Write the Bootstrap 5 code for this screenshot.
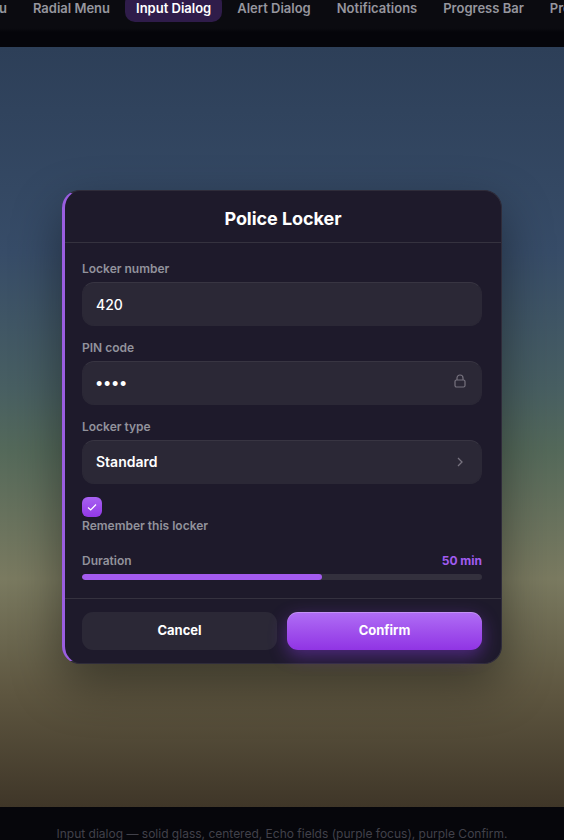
<!DOCTYPE html>
<html lang="en">
<head>
<meta charset="utf-8">
<title>Input Dialog</title>
<link href="https://cdn.jsdelivr.net/npm/bootstrap@5.3.0/dist/css/bootstrap.min.css" rel="stylesheet">
<style>
html,body{height:840px;overflow:hidden;background:#06060b;font-family:Inter,"Liberation Sans",sans-serif}
.topbar{height:47px;overflow:hidden;background:linear-gradient(#0b0b10 0,#0b0b10 28px,#05050a 32px)}
.tabs{flex-wrap:nowrap;gap:4px;width:max-content;margin-top:-7px;margin-left:-92.5px}
.tabs .nav-link{font-size:13px;font-weight:600;line-height:16px;padding:6.5px 11px;color:#96969e;border-radius:10px;white-space:nowrap}
.tabs .nav-link.active{background:#2f1c4a;color:#fff}
.stage{height:760px;background:linear-gradient(180deg,#2d3f58 0,#374c68 27%,#485f62 45%,#54695a 53%,#7a7a60 70%,#5e5640 85%,#3f3628 100%)}
.dlg{width:440px;height:474px;margin-top:143px;background:#1e1a2b;border:1px solid #2f2c3a;border-left:3px solid #9a5ee0;border-radius:18px;box-shadow:0 20px 50px rgba(0,0,0,.42);overflow:visible}
.dlg .card-header{flex:none;background:none;border-bottom:1px solid #35323f;padding:3px 0 0 0;box-sizing:content-box;height:48px;color:#fff;font-size:18px;font-weight:700;letter-spacing:-.05px;border-radius:0}
.dlg .card-body{padding:18px 19px 0 17px;flex:none}
.lbl{display:block;font-size:12px;font-weight:600;line-height:15px;color:#92929c;margin:0 0 6px}
.fieldwrap{margin-bottom:14px}
.fieldwrap.lastfield{margin-bottom:13px}
.dlg .form-control{height:44px;background:#2b2836;border:1px solid #2b2836;border-top-color:#383542;border-radius:12px;color:#fff;font-size:14px;font-weight:500;padding:0 13px;box-shadow:none}
.dlg .form-control:focus{background:#2b2836;color:#fff;border-color:#2b2836;border-top-color:#383542}
.dlg .pinfield{letter-spacing:1.7px;font-family:"Liberation Sans",sans-serif;font-size:18px;padding-top:3px}
.selectfield{height:44px;background:#2b2836;border:1px solid #2b2836;border-top-color:#383542;border-radius:12px;color:#fff;font-size:14px;font-weight:600;padding:0 13px 1px}
.iconwrap{position:relative}
.iconover{position:absolute;right:15px;top:13px;width:14px;height:14px}
.chev{margin-right:1px}
.tick{width:20px;height:20px;background:linear-gradient(#a862f2,#9238e6);border-radius:6px}
.remember{font-size:12px;font-weight:600;line-height:15px;color:#92929c;margin-top:1px}
.durhead{margin-top:20px;font-size:12px;font-weight:600;line-height:15px;color:#92929c}
.durval{color:#a15cf0;font-weight:700}
.dlg .progress{height:6px;background:#33303d;border-radius:3px;margin-top:6px}
.dlg .progress-bar{background:#a35bef;border-radius:3px}
.dlg .card-footer{background:none;border-top:1px solid #35323f;padding:13px 19px 13px 17px;margin-top:18px;gap:10px;border-radius:0}
.dlg .btn{height:38px;flex:1 1 0;border-radius:11px;border:0;font-size:13px;font-weight:700;color:#fff;padding:0}
.btn-cancel{background:#2b2836}
.btn-confirm{background:linear-gradient(#b06ef5,#9034e4);box-shadow:inset 0 1px 0 rgba(255,255,255,.25),0 6px 18px rgba(140,60,230,.45)}
.caption{height:33px;padding-top:19px;font-size:12px;line-height:15px;color:#41414a;white-space:nowrap}
</style>
</head>
<body>
<div class="topbar">
  <ul class="nav tabs">
    <li class="nav-item"><a class="nav-link" href="#">Context Menu</a></li>
    <li class="nav-item"><a class="nav-link" href="#">Radial Menu</a></li>
    <li class="nav-item"><a class="nav-link active" href="#">Input Dialog</a></li>
    <li class="nav-item"><a class="nav-link" href="#">Alert Dialog</a></li>
    <li class="nav-item"><a class="nav-link" href="#">Notifications</a></li>
    <li class="nav-item"><a class="nav-link" href="#">Progress Bar</a></li>
    <li class="nav-item"><a class="nav-link" href="#">Progress Ring</a></li>
  </ul>
</div>
<div class="stage d-flex justify-content-center align-items-start">
  <div class="card dlg">
    <div class="card-header d-flex align-items-center justify-content-center">Police Locker</div>
    <div class="card-body">
      <div class="fieldwrap">
        <label class="lbl" for="n">Locker number</label>
        <input id="n" class="form-control" value="420">
      </div>
      <div class="fieldwrap">
        <label class="lbl" for="p">PIN code</label>
        <div class="iconwrap">
          <input id="p" type="password" class="form-control pinfield" value="1234">
          <svg class="iconover" viewBox="0 0 14 14" fill="none" stroke="#77737f" stroke-width="1.2"><rect x="2" y="6" width="10" height="7" rx="1.5"/><path d="M4 6V4a3 3 0 0 1 6 0v2"/></svg>
        </div>
      </div>
      <div class="fieldwrap lastfield">
        <div class="lbl">Locker type</div>
        <div class="selectfield d-flex align-items-center justify-content-between">
          <span>Standard</span>
          <svg class="chev" width="14" height="14" viewBox="0 0 14 14" fill="none" stroke="#77737f" stroke-width="1.3"><path d="M5 3l4 4-4 4"/></svg>
        </div>
      </div>
      <div class="tick d-flex align-items-center justify-content-center">
        <svg width="12" height="12" viewBox="0 0 12 12" fill="none" stroke="#fff" stroke-width="1.2"><path d="M2 6.5l2.7 2.5L10 3.5"/></svg>
      </div>
      <div class="remember">Remember this locker</div>
      <div class="durhead d-flex justify-content-between"><span>Duration</span><span class="durval">50 min</span></div>
      <div class="progress"><div class="progress-bar" style="width:60%"></div></div>
    </div>
    <div class="card-footer d-flex">
      <button class="btn btn-cancel">Cancel</button>
      <button class="btn btn-confirm">Confirm</button>
    </div>
  </div>
</div>
<div class="caption text-center">Input dialog — solid glass, centered, Echo fields (purple focus), purple Confirm.</div>
<script src="https://cdn.jsdelivr.net/npm/bootstrap@5.3.0/dist/js/bootstrap.bundle.min.js"></script>
</body>
</html>
